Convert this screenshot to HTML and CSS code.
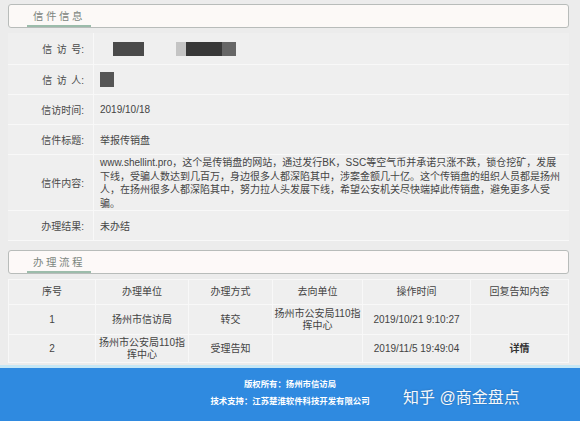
FILE: index.html
```html
<!DOCTYPE html>
<html lang="zh">
<head>
    <meta charset="UTF-8">
    <title>信件信息</title>
    <link rel="stylesheet" href="styles.css">
</head>
<body>
    <div class="page">
        <div class="tab-bar">
            <span class="tab">信件信息</span>
        </div>
        <div class="info">
            <div class="info-row tall">
                <div class="label"><span class="spaced">信访</span>号:</div>
                <div class="value">
                    <span class="blur b1"></span>
                    <span class="blur b2"></span>
                </div>
            </div>
            <div class="info-row">
                <div class="label"><span class="spaced">信访</span>人:</div>
                <div class="value"><span class="blur b3"></span></div>
            </div>
            <div class="info-row">
                <div class="label">信访时间:</div>
                <div class="value">2019/10/18</div>
            </div>
            <div class="info-row">
                <div class="label">信件标题:</div>
                <div class="value">举报传销盘</div>
            </div>
            <div class="info-row">
                <div class="label">信件内容:</div>
                <div class="value text">www.shellint.pro，这个是传销盘的网站，通过发行BK，SSC等空气币并承诺只涨不跌，锁仓挖矿，发展下线，受骗人数达到几百万，身边很多人都深陷其中，涉案金额几十亿。这个传销盘的组织人员都是扬州人，在扬州很多人都深陷其中，努力拉人头发展下线，希望公安机关尽快端掉此传销盘，避免更多人受骗。</div>
            </div>
            <div class="info-row">
                <div class="label">办理结果:</div>
                <div class="value">未办结</div>
            </div>
        </div>

        <div class="tab-bar second">
            <span class="tab">办理流程</span>
        </div>
        <table class="flow">
            <colgroup>
                <col style="width: 87px">
                <col style="width: 93px">
                <col style="width: 84px">
                <col style="width: 90px">
                <col style="width: 108px">
                <col style="width: 98px">
            </colgroup>
            <tr class="head">
                <td>序号</td>
                <td>办理单位</td>
                <td>办理方式</td>
                <td>去向单位</td>
                <td>操作时间</td>
                <td>回复告知内容</td>
            </tr>
            <tr class="r1">
                <td>1</td>
                <td>扬州市信访局</td>
                <td>转交</td>
                <td>扬州市公安局110指挥中心</td>
                <td>2019/10/21 9:10:27</td>
                <td></td>
            </tr>
            <tr class="r2">
                <td>2</td>
                <td>扬州市公安局110指挥中心</td>
                <td>受理告知</td>
                <td></td>
                <td>2019/11/5 19:49:04</td>
                <td class="link">详情</td>
            </tr>
        </table>
    </div>
    <div class="footer">
        <p>版权所有：扬州市信访局</p>
        <p>技术支持：江苏楚淮软件科技开发有限公司</p>
        <span class="mark">知乎 @商金盘点</span>
    </div>
</body>
</html>
```

FILE: styles.css
```css
* {box-sizing: border-box;}

body {
    margin: 0;
    background-color: #ececec;
    font-family: "Liberation Sans", "Noto Sans CJK SC", sans-serif;
    font-size: 10px;
    color: #444;
}

.page {
    padding: 4px 11px 0 8px;
    height: 365px;
}

.tab-bar {
    height: 24px;
    background-color: #fcf9f7;
    border: 1px solid #b8bcba;
    border-radius: 3px;
    padding-left: 18px;
}

.tab-bar.second {
    margin-top: 9px;
    background-color: #fdf9f8;
}

.tab {
    display: inline-block;
    height: 22px;
    line-height: 22px;
    padding: 0 6px;
    font-size: 10.5px;
    letter-spacing: 2.5px;
    color: #7c8680;
    border-bottom: 2px solid #9cbcab;
}

.info {
    margin-top: 5px;
    background-color: #efefef;
}

.info-row {
    display: grid;
    grid-template-columns: 86px 1fr;
    min-height: 30px;
    border-bottom: 1px solid #f8f8f8;
}

.info-row.tall {
    min-height: 32px;
}

.label {
    display: flex;
    align-items: center;
    justify-content: flex-end;
    padding-right: 9px;
    border-right: 1px solid #f8f8f8;
    color: #4a4a4a;
}

.spaced {
    letter-spacing: 4.5px;
}

.value {
    display: flex;
    align-items: center;
    padding-left: 6px;
}

.value.text {
    display: block;
    padding: 1px 6px 0 6px;
    line-height: 13.5px;
    width: 478px;
}

.blur {
    display: inline-block;
    height: 14px;
    background-color: #4a4a4a;
    filter: blur(0.6px);
}

.b1 {
    width: 31px;
    margin-left: 13px;
}

.b2 {
    width: 60px;
    margin-left: 32px;
    background: linear-gradient(to right, #c4c4c4 0 16%, #383838 16% 76%, #666 76%);
}

.b3 {
    width: 14px;
    height: 15px;
    background-color: #555;
}

.flow {
    margin-top: 5px;
    width: 560px;
    table-layout: fixed;
    border-collapse: collapse;
    background-color: #efefef;
}

.flow td {
    border: 1px solid #f8f8f8;
    padding: 0 1px;
    text-align: center;
    line-height: 12px;
    color: #444;
}

.flow tr.head td {
    height: 25px;
}

.flow tr.r1 td {
    height: 30px;
}

.flow tr.r2 td {
    height: 28px;
}

.flow td.link {
    font-weight: bold;
    color: #333;
}

.footer {
    position: relative;
    height: 56px;
    background-color: #2f8ae0;
    border-top: 3px solid #c6e7f5;
    padding-top: 10px;
    text-align: center;
    color: #fff;
}

.footer p {
    margin: 0 0 5px 0;
    font-size: 8.4px;
    line-height: 12px;
    font-weight: bold;
}

.mark {
    position: absolute;
    left: 403px;
    top: 16px;
    font-size: 16px;
    color: #f4f8fc;
    text-shadow: 0 0 2px rgba(0, 0, 0, 0.25);
}
```
